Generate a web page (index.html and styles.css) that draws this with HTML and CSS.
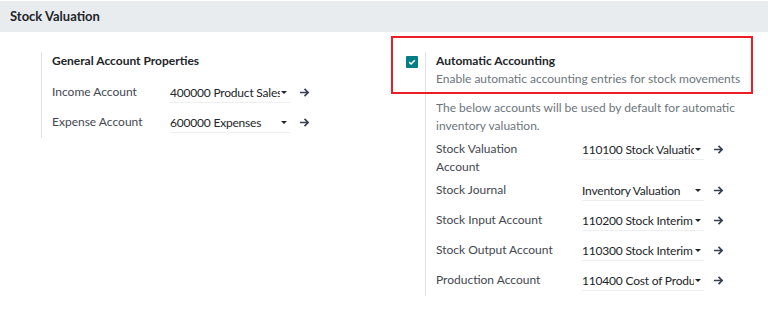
FILE: index.html
```html
<!DOCTYPE html>
<html>
<head>
    <meta charset="utf-8">
    <title>Stock Valuation</title>
    <link rel="stylesheet" href="styles.css">
</head>
<body>
<div class="section-title">Stock Valuation</div>
<div class="settings">
    <div class="col">
        <div class="setting">
            <div class="setting-left"></div>
            <div class="setting-right">
                <div class="setting-title">General Account Properties</div>
                <div class="rows">
                    <div class="row">
                        <div class="row-label">Income Account</div>
                        <div class="field">
                            <span class="field-value">400000 Product Sales</span>
                            <span class="caret"></span>
                        </div>
                        <svg class="arrow" viewBox="0 0 12 12"><path d="M1 6h9M6 2l4 4-4 4" /></svg>
                    </div>
                    <div class="row">
                        <div class="row-label">Expense Account</div>
                        <div class="field">
                            <span class="field-value">600000 Expenses</span>
                            <span class="caret"></span>
                        </div>
                        <svg class="arrow" viewBox="0 0 12 12"><path d="M1 6h9M6 2l4 4-4 4" /></svg>
                    </div>
                </div>
            </div>
        </div>
    </div>
    <div class="col">
        <div class="setting wide">
            <div class="highlight"></div>
            <div class="setting-left">
                <span class="checkbox">
                    <svg viewBox="0 0 12 12"><path d="M3.2 6.2l1.9 1.8 3.7-3.8" /></svg>
                </span>
            </div>
            <div class="setting-right">
                <div class="setting-title">Automatic Accounting</div>
                <div class="setting-desc">Enable automatic accounting entries for stock movements</div>
                <div class="setting-note">The below accounts will be used by default for automatic inventory valuation.</div>
                <div class="rows">
                    <div class="row">
                        <div class="row-label">Stock Valuation Account</div>
                        <div class="field">
                            <span class="field-value">110100 Stock Valuation</span>
                            <span class="caret"></span>
                        </div>
                        <svg class="arrow" viewBox="0 0 12 12"><path d="M1 6h9M6 2l4 4-4 4" /></svg>
                    </div>
                    <div class="row">
                        <div class="row-label">Stock Journal</div>
                        <div class="field">
                            <span class="field-value">Inventory Valuation</span>
                            <span class="caret"></span>
                        </div>
                        <svg class="arrow" viewBox="0 0 12 12"><path d="M1 6h9M6 2l4 4-4 4" /></svg>
                    </div>
                    <div class="row">
                        <div class="row-label">Stock Input Account</div>
                        <div class="field">
                            <span class="field-value">110200 Stock Interim (Received)</span>
                            <span class="caret"></span>
                        </div>
                        <svg class="arrow" viewBox="0 0 12 12"><path d="M1 6h9M6 2l4 4-4 4" /></svg>
                    </div>
                    <div class="row">
                        <div class="row-label">Stock Output Account</div>
                        <div class="field">
                            <span class="field-value">110300 Stock Interim (Delivered)</span>
                            <span class="caret"></span>
                        </div>
                        <svg class="arrow" viewBox="0 0 12 12"><path d="M1 6h9M6 2l4 4-4 4" /></svg>
                    </div>
                    <div class="row">
                        <div class="row-label">Production Account</div>
                        <div class="field">
                            <span class="field-value">110400 Cost of Production</span>
                            <span class="caret"></span>
                        </div>
                        <svg class="arrow" viewBox="0 0 12 12"><path d="M1 6h9M6 2l4 4-4 4" /></svg>
                    </div>
                </div>
            </div>
        </div>
    </div>
</div>
</body>
</html>
```

FILE: styles.css
```css
body {
    margin: 0;
    font-family: Lato, "Noto Sans", sans-serif;
    font-size: 12px;
    line-height: 18px;
    color: #434851;
    background-color: #fff;
}
.section-title {
    margin-top: 1px;
    height: 31px;
    line-height: 31px;
    padding-left: 10px;
    background-color: #e9ecef;
    color: #212529;
    font-size: 13px;
    font-weight: 700;
}
.settings {
    display: grid;
    grid-template-columns: 1fr 1fr;
    margin-top: 20px;
}
.col {
    padding: 0 8px 0 7px;
}
.setting {
    position: relative;
    display: flex;
}
.setting-left {
    width: 34px;
    flex-shrink: 0;
}
.setting-right {
    flex: 1;
    border-left: 1px solid #dee2e6;
    padding-left: 10px;
}
.setting-title {
    color: #212529;
    font-weight: 700;
}
.setting-desc {
    color: #6c757d;
}
.setting-note {
    color: #6c757d;
    margin-top: 11px;
    padding-right: 24px;
}
.wide .rows {
    margin-top: 5px;
}
.rows {
    display: flex;
    flex-direction: column;
    gap: 5px;
    margin-top: 13px;
}
.row {
    display: flex;
    align-items: flex-start;
    min-height: 25px;
}
.row-label {
    width: 118px;
    flex-shrink: 0;
    padding-right: 8px;
    box-sizing: border-box;
}
.wide .row-label {
    width: 146px;
    padding-right: 24px;
}
.field {
    display: flex;
    align-items: center;
    width: 120px;
    height: 20px;
    border-bottom: 1px solid #eceef0;
    color: #212529;
    box-sizing: border-box;
}
.wide .field {
    width: 122px;
}
.field-value {
    flex: 1;
    overflow: hidden;
    white-space: nowrap;
    letter-spacing: -0.2px;
}
.caret {
    width: 0;
    height: 0;
    margin: 0 3px 0 1px;
    border-left: 3px solid transparent;
    border-right: 3px solid transparent;
    border-top: 3px solid #212529;
}
.arrow {
    width: 11px;
    height: 11px;
    margin: 4px 0 0 9px;
    fill: none;
    stroke: #374151;
    stroke-width: 1.8;
}
.checkbox {
    display: block;
    width: 12px;
    height: 12px;
    margin: 4px 0 0 15px;
    background-color: #017e84;
    border-radius: 1px;
}
.checkbox svg {
    display: block;
    width: 12px;
    height: 12px;
    fill: none;
    stroke: #fff;
    stroke-width: 1.6;
}
.highlight {
    position: absolute;
    left: 0;
    top: -16px;
    width: 362px;
    height: 58px;
    border: 2px solid #ee1c25;
    box-sizing: border-box;
    pointer-events: none;
}
```
